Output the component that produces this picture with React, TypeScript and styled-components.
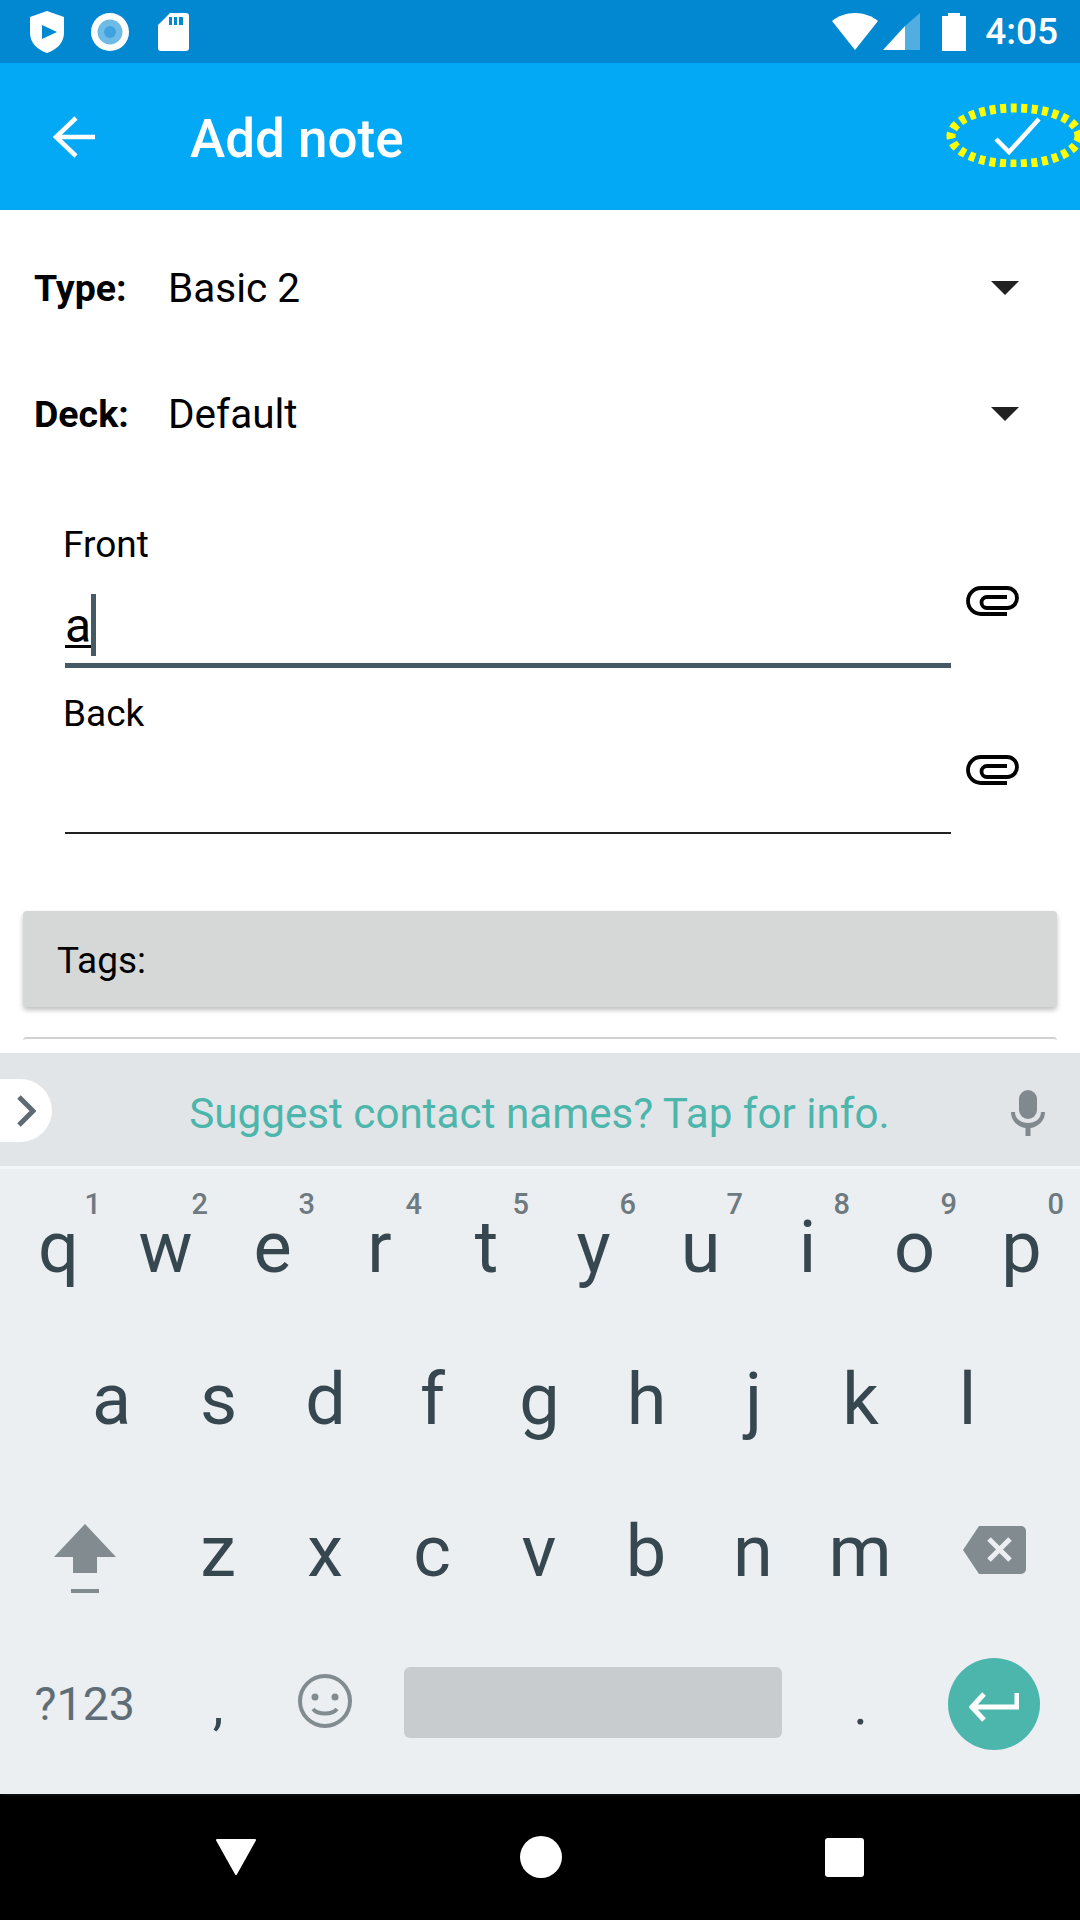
import React from "react";
import styled, { createGlobalStyle } from "styled-components";

const Global = createGlobalStyle`
  html, body { margin: 0; padding: 0; background: #fff; }
  * { box-sizing: border-box; }
  body { font-family: Roboto, "Liberation Sans", sans-serif; }
`;

const Screen = styled.div`
  width: 1080px; height: 1920px; display: flex; flex-direction: column; overflow: hidden; background: #fff;
`;
const StatusBar = styled.div`
  height: 63px; flex: none; background: #0288d1; display: flex; align-items: center; padding: 0 22px 0 30px; color: #fff;
`;
const StatusLeft = styled.div`display: flex; align-items: center; gap: 27px;`;
const SdIcon = styled.svg`margin-left: 2px;`;
const StatusRight = styled.div`display: flex; align-items: center; margin-left: auto; gap: 5px;`;
const BatteryIcon = styled.svg`margin-left: 17px;`;
const Clock = styled.span`font-size: 37px; font-weight: 500; margin-left: 14px; line-height: 63px;`;

const Toolbar = styled.div`
  height: 147px; flex: none; background: #03a9f4; display: flex; align-items: center; position: relative; padding-left: 53px; color: #fff;
`;
const Title = styled.div`font-size: 53px; font-weight: 500; margin: 4px 0 0 95px;`;
const Highlight = styled.svg`position: absolute; left: 940px; top: 34px;`;

const Content = styled.div`
  flex: 1; min-height: 0; overflow: hidden; padding-top: 14px;
`;
const SelectRow = styled.div`
  height: 126px; display: flex; align-items: center; padding: 2px 61px 0 34px; font-size: 40.5px; color: #000;
`;
const SelectLabel = styled.span`font-weight: 700; font-size: 37.5px; width: 134px;`;
const SelectValue = styled.span`flex: 1;`;
const Arrow = styled.span`
  width: 0; height: 0; border-left: 14px solid transparent; border-right: 14px solid transparent; border-top: 14px solid #212121;
`;
const Fields = styled.div`padding: 46px 60px 0 65px;`;
const FieldRow = styled.div`display: flex; margin-bottom: 23px;`;
const Field = styled.div`width: 886px; flex: none;`;
const FieldLabel = styled.div`font-size: 37px; height: 44px; line-height: 46px; color: #000; margin-left: -2px;`;
const FieldInput = styled.div<{ $focused?: boolean }>`
  display: flex; align-items: flex-start;
  height: ${(p) => (p.$focused ? 102 : 99)}px;
  border-bottom: ${(p) => (p.$focused ? "5px solid #455a64" : "2px solid #212121")};
  font-size: 48px; color: #000; padding-top: 28px;
`;
const Typed = styled.span`text-decoration: underline; text-decoration-thickness: 3px; text-underline-offset: 3px; line-height: 60px; margin-top: 2px;`;
const Caret = styled.span`width: 5px; height: 62px; background: #455a64; flex: none;`;
const ClipIcon = styled.svg`margin: 64px 0 0 15px; flex: none;`;
const TagCard = styled.div`
  margin: 77px 23px 0; height: 96px; background: #d6d7d7; border-radius: 4px; display: flex; align-items: center; padding: 3px 0 0 34px;
  font-size: 37px; color: #000; box-shadow: 0 3px 5px rgba(0,0,0,.25);
`;
const NextCard = styled.div`
  margin: 30px 23px 0; height: 40px; border-top: 2px solid #d0d1d1; border-radius: 4px;
`;

const Keyboard = styled.div`
  flex: none; height: 741px; background: #ebeff2; box-shadow: 0 -6px 8px #fff; position: relative;
`;
const Suggest = styled.div`
  height: 116px; background: #e2e5e8; border-bottom: 3px solid #f4f6f7; display: flex; align-items: center; position: relative; justify-content: center; padding-top: 7px; margin-bottom: 3px;
`;
const SuggestText = styled.div`font-size: 42.2px; color: #4db6ac; margin-right: 1px;`;
const Pill = styled.div`
  position: absolute; left: 0; top: 26px; width: 52px; height: 63px; background: #fff; border-radius: 0 32px 32px 0; display: flex; align-items: center; justify-content: flex-start; padding-left: 16px;
`;
const Mic = styled.svg`position: absolute; left: 1011px; top: 37px;`;
const KeyRow = styled.div<{ $cols: string; $pad?: number }>`
  height: 152px; display: grid; grid-template-columns: ${(p) => p.$cols}; padding-left: ${(p) => p.$pad ?? 0}px;
`;
const Key = styled.div`
  position: relative; display: flex; align-items: center; justify-content: center; font-size: 72px; color: #37474f; line-height: 1;
`;
const Hint = styled.span`
  position: absolute; right: 11px; top: 16px; font-size: 29px; font-weight: 500; color: #6e7a80; line-height: 32px;
`;
const ModeKey = styled(Key)`font-size: 46.5px; color: #5f6e76; padding-left: 5px;`;
const PunctKey = styled(Key)`font-size: 54px; padding-top: 3px;`;
const ShiftIcon = styled.svg`margin: 14px 0 0 5px;`;
const BackspaceIcon = styled.svg`margin-bottom: 5px;`;
const SmileIcon = styled.svg`margin-bottom: 6px;`;
const SpaceCell = styled.div`display: flex; align-items: center; justify-content: center;`;
const SpaceBar = styled.div`width: 378px; height: 71px; background: #c8cccf; border-radius: 6px; margin-bottom: 3px;`;
const EnterCircle = styled.div`
  width: 92px; height: 92px; border-radius: 50%; background: #4db6ac; display: flex; align-items: center; justify-content: center;
`;
const NavBar = styled.div`
  height: 126px; flex: none; background: #000; display: flex; align-items: center; justify-content: space-between; padding: 0 216px 0 215px;
`;

const row1: [string, string][] = [["q","1"],["w","2"],["e","3"],["r","4"],["t","5"],["y","6"],["u","7"],["i","8"],["o","9"],["p","0"]];
const row2 = "asdfghjkl".split("");
const row3 = "zxcvbnm".split("");

const Clip = () => (
  <ClipIcon width="54" height="30" viewBox="0 0 54 30" fill="none" stroke="#000" strokeWidth="3.8">
    <path d="M41 28H15A13 13 0 0 1 15 2H41A10 10 0 0 1 41 22H21A5.5 5.5 0 0 1 21 11H41" />
  </ClipIcon>
);

export default function App() {
  return (
    <Screen>
      <Global />
      <StatusBar>
        <StatusLeft>
          <svg width="34" height="42" viewBox="0 0 34 42">
            <path fillRule="evenodd" fill="#fff" d="M17 0L34 6V22C34 32 26 39 17 42C8 39 0 32 0 22V6ZM12 14V28L27 21Z" />
          </svg>
          <svg width="38" height="38" viewBox="0 0 38 38">
            <circle cx="19" cy="19" r="19" fill="#fff" />
            <circle cx="19" cy="19" r="12.5" fill="#6fbbe8" />
            <circle cx="19" cy="19" r="6" fill="#3fa3df" />
          </svg>
          <SdIcon width="31" height="38" viewBox="0 0 31 38">
            <path fillRule="evenodd" fill="#fff" d="M12 0H28A3 3 0 0 1 31 3V35A3 3 0 0 1 28 38H3A3 3 0 0 1 0 35V12ZM11 4V12H14V4ZM16 4V12H19V4ZM21 4V12H25V4Z" />
          </SdIcon>
        </StatusLeft>
        <StatusRight>
          <svg width="46" height="37" viewBox="0 0 46 37"><path fill="#fff" d="M23 37L0 8C6 3 14 0 23 0S40 3 46 8Z" /></svg>
          <svg width="37" height="37" viewBox="0 0 37 37">
            <path fill="#52aee0" d="M37 0V37H22V13Z" />
            <path fill="#fff" d="M22 13V37H0Z" />
          </svg>
          <BatteryIcon width="24" height="38" viewBox="0 0 24 38"><path fill="#fff" d="M6 0H18V3H24V38H0V3H6Z" /></BatteryIcon>
          <Clock>4:05</Clock>
        </StatusRight>
      </StatusBar>
      <Toolbar>
        <svg width="42" height="44" viewBox="0 0 42 44" fill="none" stroke="#fff" strokeWidth="4.5">
          <path d="M42 22H4M23 3L3 22L23 41" />
        </svg>
        <Title>Add note</Title>
        <Highlight width="140" height="70" viewBox="0 0 140 70" fill="none">
          <ellipse cx="75" cy="39" rx="64" ry="28" stroke="#ffff00" strokeWidth="9" strokeDasharray="6 4.5" />
          <path d="M56 42L69 55L99 22" stroke="#fff" strokeWidth="4.5" />
        </Highlight>
      </Toolbar>
      <Content>
        <SelectRow><SelectLabel>Type:</SelectLabel><SelectValue>Basic 2</SelectValue><Arrow /></SelectRow>
        <SelectRow><SelectLabel>Deck:</SelectLabel><SelectValue>Default</SelectValue><Arrow /></SelectRow>
        <Fields>
          <FieldRow>
            <Field>
              <FieldLabel>Front</FieldLabel>
              <FieldInput $focused><Typed>a</Typed><Caret /></FieldInput>
            </Field>
            <Clip />
          </FieldRow>
          <FieldRow>
            <Field>
              <FieldLabel>Back</FieldLabel>
              <FieldInput />
            </Field>
            <Clip />
          </FieldRow>
        </Fields>
        <TagCard>Tags:</TagCard>
        <NextCard />
      </Content>
      <Keyboard>
        <Suggest>
          <Pill>
            <svg width="20" height="32" viewBox="0 0 20 32" fill="none" stroke="#5f6b72" strokeWidth="5"><path d="M3 2L17 16L3 30" /></svg>
          </Pill>
          <SuggestText>Suggest contact names? Tap for info.</SuggestText>
          <Mic width="34" height="46" viewBox="0 0 34 46" fill="#80898d">
            <rect x="8" y="0" width="18" height="29" rx="9" />
            <path d="M0 22H4C4 29 10 33 17 33S30 29 30 22H34C34 31 27 37 19.5 38V46H14.5V38C7 37 0 31 0 22Z" />
          </Mic>
        </Suggest>
        <KeyRow $cols="repeat(10, 107px)" $pad={5}>
          {row1.map(([k, d]) => <Key key={k}>{k}<Hint>{d}</Hint></Key>)}
        </KeyRow>
        <KeyRow $cols="repeat(9, 107px)" $pad={58}>
          {row2.map((k) => <Key key={k}>{k}</Key>)}
        </KeyRow>
        <KeyRow $cols="164.5px repeat(7, 107px) 161px">
          <Key>
            <ShiftIcon width="64" height="70" viewBox="0 0 64 70" fill="#828c90">
              <path d="M32 0L63 33H44V49H20V33H1Z" />
              <rect x="18" y="65" width="28" height="4" />
            </ShiftIcon>
          </Key>
          {row3.map((k) => <Key key={k}>{k}</Key>)}
          <Key>
            <BackspaceIcon width="63" height="48" viewBox="0 0 63 48">
              <path fill="#828c90" d="M16 0H58A5 5 0 0 1 63 5V43A5 5 0 0 1 58 48H16L0 24Z" />
              <path stroke="#ebeff2" strokeWidth="5" d="M26 13L47 34M47 13L26 34" />
            </BackspaceIcon>
          </Key>
        </KeyRow>
        <KeyRow $cols="164.5px 107px 107px 428.5px 107px 160px">
          <ModeKey>?123</ModeKey>
          <PunctKey>,</PunctKey>
          <Key>
            <SmileIcon width="54" height="54" viewBox="0 0 54 54" fill="none" stroke="#828c90" strokeWidth="4">
              <circle cx="27" cy="27" r="25" />
              <circle cx="17" cy="23" r="3.5" fill="#828c90" stroke="none" />
              <circle cx="37" cy="23" r="3.5" fill="#828c90" stroke="none" />
              <path d="M15 35C20 41 34 41 39 35" />
            </SmileIcon>
          </Key>
          <SpaceCell><SpaceBar /></SpaceCell>
          <PunctKey>.</PunctKey>
          <SpaceCell>
            <EnterCircle>
              <svg width="50" height="40" viewBox="0 0 50 40" fill="none" stroke="#fff" strokeWidth="5">
                <path d="M48 9V23H4M15 10L3 23L15 36" />
              </svg>
            </EnterCircle>
          </SpaceCell>
        </KeyRow>
      </Keyboard>
      <NavBar>
        <svg width="42" height="38" viewBox="0 0 42 38"><path fill="#fff" stroke="#fff" strokeWidth="2" strokeLinejoin="round" d="M2 2H40L21 36Z" /></svg>
        <svg width="42" height="42" viewBox="0 0 42 42"><circle cx="21" cy="21" r="21" fill="#fff" /></svg>
        <svg width="39" height="39" viewBox="0 0 39 39"><rect width="39" height="39" rx="3" fill="#fff" /></svg>
      </NavBar>
    </Screen>
  );
}
